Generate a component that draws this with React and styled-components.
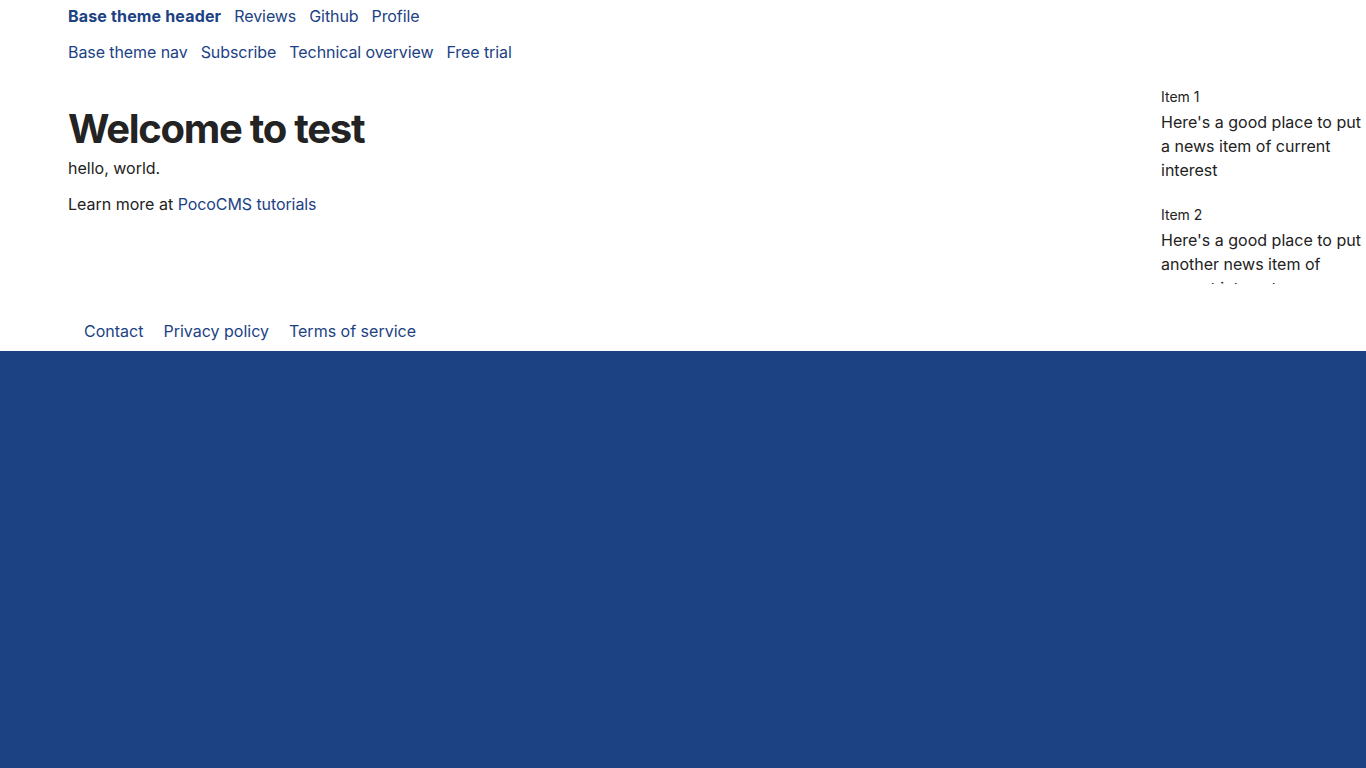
import React from "react";
import styled, { createGlobalStyle } from "styled-components";

const Global = createGlobalStyle`
  html, body { margin: 0; padding: 0; background: #1c4284; }
  body { font-family: Inter, "Noto Sans", sans-serif; color: #222; font-size: 16px; }
  a { color: #1c4284; text-decoration: none; }
`;

const Page = styled.div`
  background: #fff;
`;

const Bar = styled.nav`
  display: flex;
  align-items: center;
  gap: 13px;
  padding: 0 68px;
  height: ${p => (p.$first ? "32px" : "40px")};
  line-height: 24px;
`;

const Link = styled.a`
  font-weight: ${p => (p.$bold ? 700 : 400)};
  letter-spacing: ${p => (p.$bold ? "0.01em" : "-0.005em")};
`;

const FooterLink = styled.a`
  letter-spacing: 0;
`;

const Body = styled.div`
  display: grid;
  grid-template-columns: 1fr 205px;
  padding-left: 68px;
`;

const Main = styled.main`
  padding-top: 33px;
`;

const Title = styled.h1`
  margin: 0 0 3px;
  font-size: 40px;
  line-height: 48px;
  font-weight: 700;
  letter-spacing: -0.032em;
  color: #232323;
`;

const Para = styled.p`
  margin: 0 0 12px;
  line-height: 24px;
`;

const Aside = styled.aside`
  box-sizing: border-box;
  height: 212px;
  padding-top: 15px;
  overflow: hidden;
`;

const Item = styled.div`
  margin-bottom: 23px;
`;

const ItemLabel = styled.div`
  font-size: 14px;
  line-height: 20px;
  margin-bottom: 3px;
`;

const ItemText = styled.div`
  line-height: 24px;
`;

const Footer = styled.footer`
  display: flex;
  gap: 20px;
  padding: 35px 84px 8px;
  line-height: 24px;
`;

export default function App() {
  return (
    <>
      <Global />
      <Page>
        <Bar $first>
          <Link href="#" $bold>Base theme header</Link>
          <Link href="#">Reviews</Link>
          <Link href="#">Github</Link>
          <Link href="#">Profile</Link>
        </Bar>
        <Bar>
          <Link href="#">Base theme nav</Link>
          <Link href="#">Subscribe</Link>
          <Link href="#">Technical overview</Link>
          <Link href="#">Free trial</Link>
        </Bar>
        <Body>
          <Main>
            <Title>Welcome to test</Title>
            <Para>hello, world.</Para>
            <Para>Learn more at <Link href="#">PocoCMS tutorials</Link></Para>
          </Main>
          <Aside>
            <Item>
              <ItemLabel>Item 1</ItemLabel>
              <ItemText>Here's a good place to put a news item of current interest</ItemText>
            </Item>
            <Item>
              <ItemLabel>Item 2</ItemLabel>
              <ItemText>Here's a good place to put another news item of current interest</ItemText>
            </Item>
          </Aside>
        </Body>
        <Footer>
          <FooterLink href="#">Contact</FooterLink>
          <FooterLink href="#">Privacy policy</FooterLink>
          <FooterLink href="#">Terms of service</FooterLink>
        </Footer>
      </Page>
    </>
  );
}
